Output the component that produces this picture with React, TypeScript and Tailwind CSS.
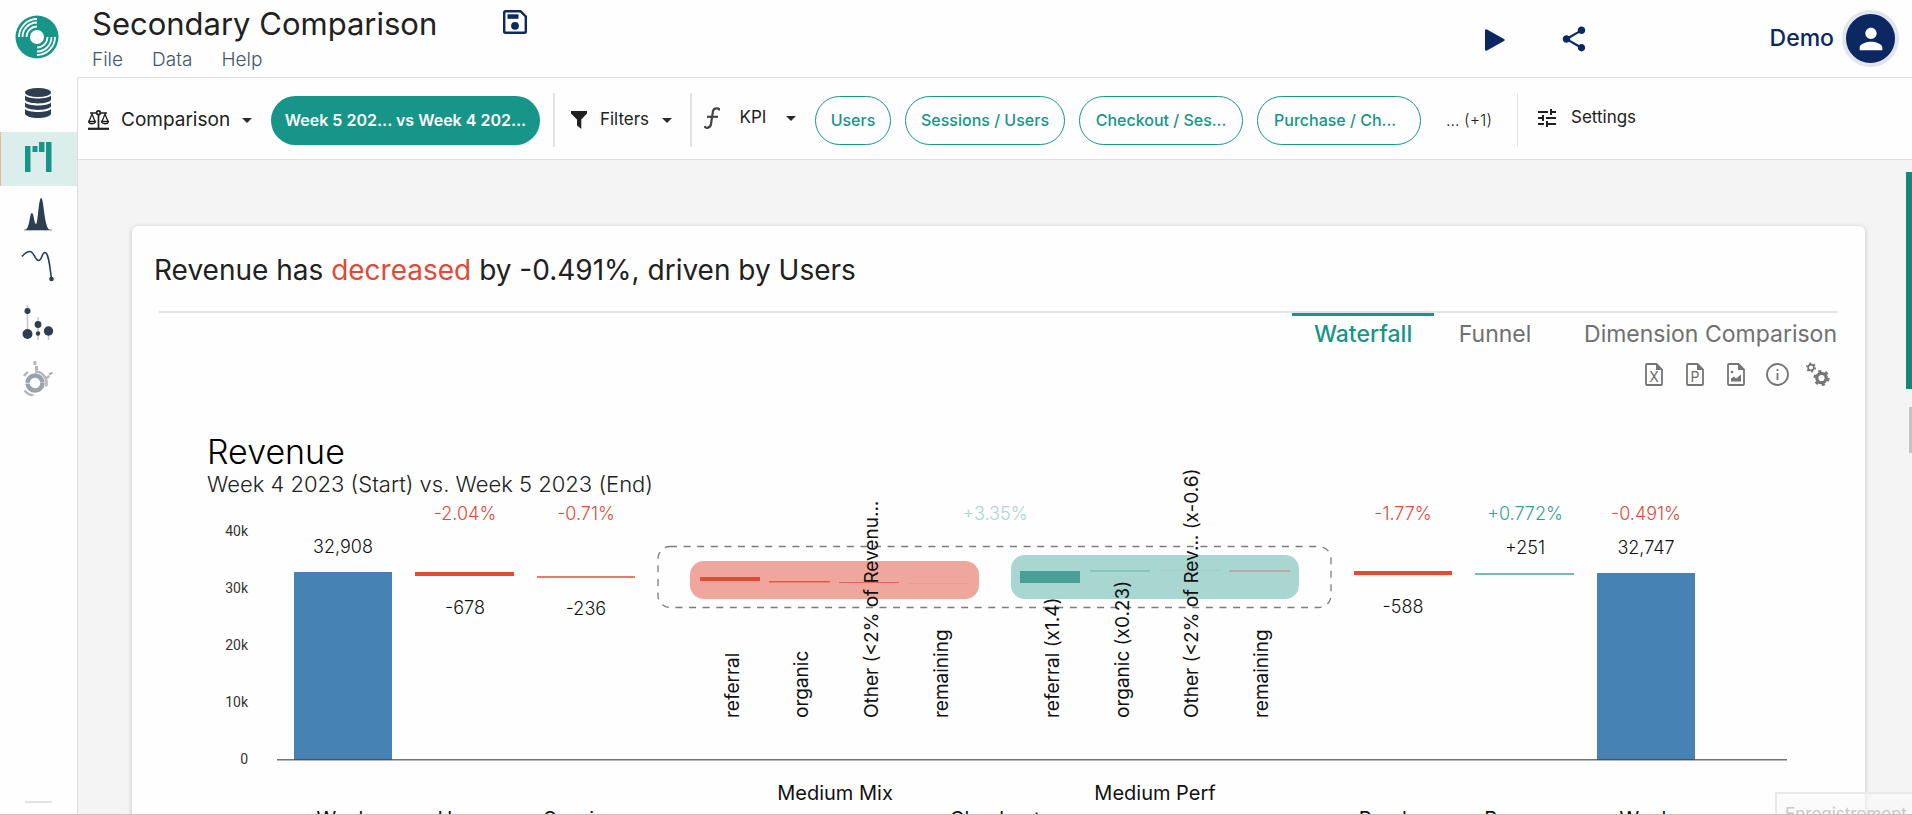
import type { ReactNode } from "react";
import { MdPerson, MdShare, MdTune } from "react-icons/md";

const RED = "#e04b38";
const TEAL = "#3a9f93";

function Logo() {
  return (
    <svg viewBox="0 0 44 44" className="h-11 w-11" aria-hidden="true">
      <circle cx="22" cy="22" r="21.5" fill="#169588" />
      <circle cx="22" cy="22" r="7" fill="#fff" />
      <g fill="none" stroke="#fff" strokeWidth="1.8">
        <path d="M4 22A18 18 0 0 1 22 4" />
        <path d="M7.5 22A14.500 14.500 0 0 1 22 7.500" />
        <path d="M11.500 22A10.500 10.500 0 0 1 22 11.500" />
        <path d="M40 22A18 18 0 0 1 22 40" />
        <path d="M36.500 22A14.500 14.500 0 0 1 22 36.500" />
        <path d="M32.500 22A10.500 10.500 0 0 1 22 32.500" />
      </g>
    </svg>
  );
}

function DatabaseIcon() {
  return (
    <svg viewBox="0 0 26 30" className="h-[30px] w-[26px]" fill="#2c3e50">
      <ellipse cx="13" cy="4.500" rx="13" ry="4.500" />
      <path d="M0 7.500c3 4 23 4 26 0v4.500c-3 4.500-23 4.500-26 0z" />
      <path d="M0 14.500c3 4 23 4 26 0v4c-3 4.500-23 4.500-26 0z" />
      <path d="M0 21c3 4 23 4 26 0v5c-3 5.300-23 5.300-26 0z" />
    </svg>
  );
}

function WaterfallIcon() {
  return (
    <svg viewBox="0 0 27 30" className="h-[30px] w-[27px]" fill="#169588">
      <rect x="0" y="4" width="5.500" height="26" />
      <rect x="7.500" y="4" width="5" height="6" />
      <rect x="14" y="0" width="5.500" height="10" />
      <rect x="21" y="0" width="5.500" height="30" />
    </svg>
  );
}

function PeaksIcon() {
  return (
    <svg viewBox="0 0 28 34" className="h-[34px] w-7" fill="#2c3e50">
      <path d="M1 32c5-1 4.500-17 6.800-17s2.200 11 4.200 11 2.500-26 5.200-26 3 31 8.800 32z" />
      <rect x="0" y="31.500" width="28" height="1" opacity=".6" />
    </svg>
  );
}

function CurveIcon() {
  return (
    <svg viewBox="0 0 33 32" className="h-8 w-[33px]" fill="none">
      <path d="M1 6.500C4 3 6 1.500 9 1.500c4 0 5 9 8.500 9S21 2 24 2.500c4 .5 5 17 6.500 26" stroke="#2c3e50" strokeWidth="1.600" />
      <circle cx="30.500" cy="29" r="2.300" fill="#2c3e50" />
    </svg>
  );
}

function BubblesIcon() {
  return (
    <svg viewBox="0 0 32 36" className="h-9 w-8">
      <path d="M5.500 0v34M16 12v23M26.500 22v13" stroke="#c4c8cb" strokeWidth="1.500" />
      <g fill="#2c3e50">
        <circle cx="5.500" cy="6" r="3" />
        <circle cx="5.500" cy="29" r="5" />
        <circle cx="16" cy="19.500" r="3.400" />
        <circle cx="16" cy="28.500" r="2.200" />
        <circle cx="26.500" cy="26" r="4.700" />
      </g>
    </svg>
  );
}

function SunburstIcon() {
  return (
    <svg viewBox="0 0 30 36" className="h-9 w-[30px]" fill="none">
      <circle cx="12" cy="23" r="7.500" stroke="#98a3ad" strokeWidth="4.500" strokeDasharray="22.800 .760" />
      <g stroke="#b3b7b8">
        <path d="M12 11.500A11.500 11.500 0 0 1 23 26.500" strokeWidth="2.500" />
        <path d="M1 16a13 13 0 0 1 4-4M1.500 30.500a13 13 0 0 0 9 5" strokeWidth="2.500" />
        <path d="M12 1v4M13.500 6v4" strokeWidth="3" />
        <path d="M22.500 18.500l4-2.500M26 14.500l3.500-2" strokeWidth="2.500" />
      </g>
    </svg>
  );
}

function SaveIcon() {
  return (
    <svg viewBox="0 0 24 24" className="h-6 w-6">
      <path d="M2.500 1.200h15l5.300 5.300v15a1.300 1.300 0 0 1-1.300 1.300h-19a1.300 1.300 0 0 1-1.300-1.300v-19A1.300 1.300 0 0 1 2.500 1.200z" fill="none" stroke="#0b2863" strokeWidth="2.400" />
      <rect x="4.500" y="4.300" width="11" height="4.500" fill="#0b2863" />
      <circle cx="12" cy="15.800" r="3.900" fill="#0b2863" />
    </svg>
  );
}

function ScaleIcon() {
  return (
    <svg viewBox="0 0 21 20" className="h-5 w-[21px]" fill="none" stroke="#212121" strokeWidth="1.700">
      <path d="M2 3h6.500M12.500 3H19M10.500 5v13" />
      <circle cx="10.500" cy="2.800" r="1.900" />
      <path d="M1 11.500L4 4l3 7.500M14 11.500L17 4l3 7.500" strokeWidth="1.300" />
      <path d="M.5 11.500h7c-.5 3-6.500 3-7 0zM13.500 11.500h7c-.5 3-6.500 3-7 0z" strokeWidth="1.300" />
      <path d="M0 18.800h21" strokeWidth="2.200" />
    </svg>
  );
}

function FilterIcon() {
  return (
    <svg viewBox="0 0 16 18" className="h-[18px] w-4" fill="#212121">
      <path d="M0 0h16v2.500l-5.700 6V18l-4.300-3.500V8.500L0 2.500z" />
    </svg>
  );
}

function FunctionIcon() {
  return (
    <svg viewBox="0 0 16 22" className="h-[22px] w-4" fill="none" stroke="#454545" strokeWidth="2.200">
      <path d="M15.500 3.500C15.500 1 10 .3 9 4L7 17c-.5 4-5.500 5-6.500 2" />
      <path d="M3 9.800h11" />
    </svg>
  );
}

function Caret() {
  return (
    <svg viewBox="0 0 10 5" className="h-[5px] w-[10px] shrink-0" fill="#2b2b2b" aria-hidden="true">
      <path d="M0 0h10L5 5z" />
    </svg>
  );
}

function FileIcon({ children }: { children: ReactNode }) {
  return (
    <svg viewBox="0 0 18 23" className="h-[23px] w-[18px]">
      <path d="M2 1h9.500L17 6.500V21a1 1 0 0 1-1 1H2a1 1 0 0 1-1-1V2a1 1 0 0 1 1-1z" fill="none" stroke="#757575" strokeWidth="1.800" />
      <path d="M11 1v6h6.500z" fill="#757575" />
      {children}
    </svg>
  );
}

function Letter({ children }: { children: string }) {
  return (
    <text x="9" y="19" textAnchor="middle" fontSize="14" fill="#6b6b6b">
      {children}
    </text>
  );
}

const pills = [
  { text: "Users", style: "w-[76px]" },
  { text: "Sessions / Users", style: "w-[160px]" },
  { text: "Checkout / Ses...", style: "w-[164px]" },
  { text: "Purchase / Ch...", style: "w-[164px] pl-4 text-left" },
];

const navItems = [
  { label: "Data sources", icon: <DatabaseIcon />, box: "h-[55px] pb-[3px]" },
  { label: "Comparison", icon: <WaterfallIcon />, box: "h-[54px] border-l border-[#f5b09c] bg-[#dbeeeb] pb-1" },
  { label: "Distribution", icon: <PeaksIcon />, box: "h-[58px]" },
  { label: "Trend", icon: <CurveIcon />, box: "h-[44px]" },
  { label: "Segments", icon: <BubblesIcon />, box: "h-[70px]" },
  { label: "Breakdown", icon: <SunburstIcon />, box: "h-[40px]" },
];

type Bar = { x: number; y: number; w: number; h: number; fill: string };

const bars: Bar[] = [
  { x: 294, y: 572, w: 98, h: 188, fill: "#4682b4" },
  { x: 415, y: 572, w: 99, h: 4, fill: RED },
  { x: 537, y: 576, w: 98, h: 2, fill: "#e8796b" },
  { x: 1354, y: 571, w: 98, h: 4, fill: RED },
  { x: 1475, y: 573, w: 99, h: 2, fill: "#79b9b2" },
  { x: 1597, y: 573, w: 98, h: 187, fill: "#4682b4" },
  { x: 700, y: 577, w: 60, h: 4, fill: RED },
  { x: 769, y: 581, w: 61, h: 1.5, fill: "#dd5b4e" },
  { x: 839, y: 582, w: 60, h: 1, fill: "#e2665a" },
  { x: 909, y: 583, w: 60, h: 1, fill: "#eb9c92" },
  { x: 1020, y: 571, w: 60, h: 12, fill: "#499f95" },
  { x: 1090, y: 570, w: 60, h: 2, fill: "#8ac4bf" },
  { x: 1160, y: 570, w: 60, h: 1, fill: "#b7c2c2" },
  { x: 1229, y: 570, w: 61, h: 2, fill: "#b8aaa8" },
];

const ticks = [
  { t: "40k", y: 536 },
  { t: "30k", y: 593 },
  { t: "20k", y: 650 },
  { t: "10k", y: 707 },
  { t: "0", y: 764 },
];

const changes = [
  { t: "-2.04%", x: 465, fill: RED },
  { t: "-0.71%", x: 586, fill: RED },
  { t: "+3.35%", x: 995, fill: "#a5d6d0" },
  { t: "-1.77%", x: 1403, fill: RED },
  { t: "+0.772%", x: 1525, fill: TEAL },
  { t: "-0.491%", x: 1646, fill: RED },
];

const values = [
  { t: "32,908", x: 343, y: 553 },
  { t: "-678", x: 465, y: 614 },
  { t: "-236", x: 586, y: 615 },
  { t: "-588", x: 1403, y: 613 },
  { t: "+251", x: 1525, y: 554 },
  { t: "32,747", x: 1646, y: 554 },
];

const members = [
  { t: "referral", x: 739 },
  { t: "organic", x: 808 },
  { t: "Other (<2% of Revenu...", x: 878 },
  { t: "remaining", x: 948 },
  { t: "referral (x1.4)", x: 1059 },
  { t: "organic (x0.23)", x: 1129 },
  { t: "Other (<2% of Rev... (x-0.6)", x: 1198 },
  { t: "remaining", x: 1268 },
];

const stages = [
  { t: "Week", x: 343 },
  { t: "Users", x: 465 },
  { t: "Sessions", x: 586 },
  { t: "Checkout", x: 995 },
  { t: "Purchase", x: 1403 },
  { t: "Revenue", x: 1525 },
  { t: "Week", x: 1646 },
];

function WaterfallChart() {
  return (
    <svg viewBox="132 500 1733 340" className="block h-auto w-full overflow-visible" role="img" aria-label="Revenue waterfall">
      <rect x="658" y="546.500" width="673" height="61" rx="12" fill="none" stroke="#7d7d7d" strokeWidth="1.300" strokeDasharray="7 6.600" />
      <rect x="690" y="561" width="289" height="38" rx="14" fill="#efa69d" />
      <rect x="1011" y="555" width="288" height="44" rx="14" fill="#a8d6d1" />
      {bars.map((b) => (
        <rect key={b.x} x={b.x} y={b.y} width={b.w} height={b.h} fill={b.fill} />
      ))}
      <rect x="277" y="759" width="1510" height="1.500" fill="#444" opacity=".75" />
      <g fontSize="14" fill="#333" textAnchor="end" fontFamily="Roboto, sans-serif">
        {ticks.map((k) => (
          <text key={k.t} x="248" y={k.y}>{k.t}</text>
        ))}
      </g>
      <g fontSize="18" textAnchor="middle" className="font-light">
        {changes.map((c) => (
          <text key={c.x} x={c.x} y="520" fill={c.fill}>{c.t}</text>
        ))}
        {values.map((v) => (
          <text key={v.x} x={v.x} y={v.y} fill="#111">{v.t}</text>
        ))}
      </g>
      <g fontSize="19" fill="#111">
        {members.map((m) => (
          <text key={m.x} transform={`translate(${m.x} 718) rotate(-90)`}>{m.t}</text>
        ))}
      </g>
      <g fontSize="20" fill="#111" textAnchor="middle">
        <text x="835" y="800">Medium Mix</text>
        <text x="1155" y="800">Medium Perf</text>
        {stages.map((s) => (
          <text key={s.x} x={s.x} y="826">{s.t}</text>
        ))}
      </g>
    </svg>
  );
}

export default function App() {
  return (
    <div className="relative flex h-screen overflow-hidden border-b border-[#c4c4c4] bg-[#fefefe] font-[Inter,'Open_Sans',sans-serif] text-[#212121]">
      <aside className="flex w-[77px] shrink-0 flex-col">
        <a href="#home" aria-label="Home" className="flex h-[77px] items-center justify-center pb-[3px] pr-[3px]">
          <Logo />
        </a>
        <nav className="flex flex-col">
          {navItems.map((n) => (
            <button key={n.label} aria-label={n.label} className={`flex w-full items-center justify-center pr-[2px] ${n.box}`}>
              {n.icon}
            </button>
          ))}
        </nav>
        <div className="mx-auto mb-[11px] mt-auto h-[2px] w-[27px] bg-[#e2e2e2]" />
      </aside>

      <div className="flex min-w-0 flex-1 flex-col">
        <header className="flex h-[77px] shrink-0 pl-[15px] pr-[13px]">
          <div>
            <div className="flex items-start">
              <h1 className="w-[411px] pt-1 text-[31px] leading-10">Secondary Comparison</h1>
              <button aria-label="Save" className="pt-[10px]"><SaveIcon /></button>
            </div>
            <nav className="flex gap-[29px] text-[19px] font-light leading-8 text-[#44556b]">
              <button>File</button>
              <button>Data</button>
              <button>Help</button>
            </nav>
          </div>
          <div className="ml-auto flex items-center text-[#0b2863]">
            <button aria-label="Play" className="mr-[54px] pt-[2px]">
              <svg viewBox="0 0 20 22" className="h-[22px] w-5" fill="currentColor">
                <path d="M0 1.500Q0-.4 2 .4L19 10q1.500 1 0 2L2 21.600q-2 .8-2-1.100z" />
              </svg>
            </button>
            <button aria-label="Share" className="mr-[181px]"><MdShare size={30} /></button>
            <span className="mr-2 text-[23px] font-medium">Demo</span>
            <button aria-label="Account" className="flex h-[57px] w-[57px] items-center justify-center rounded-full border-4 border-[#e2e5ec] bg-[#0b2863] text-white">
              <MdPerson size={34} />
            </button>
          </div>
        </header>

        <div className="flex min-h-0 flex-1 flex-col border-l border-t border-[#dfdfdf]">
          <div className="flex h-[82px] shrink-0 items-center border-b border-[#dfdfdf] pt-[3px] text-base">
            <button className="flex w-[193px] items-center gap-3 pl-[10px]">
              <ScaleIcon />
              <span className="w-[109px] text-left text-[19px]">Comparison</span>
              <Caret />
            </button>
            <button className="h-[49px] w-[269px] rounded-full bg-[#169588] font-semibold text-white">
              Week 5 202... vs Week 4 202...
            </button>
            <div className="ml-[13px] h-[54px] w-[2px] bg-[#e2e2e2]" />
            <button className="flex w-[135px] items-center gap-3 pl-4 text-[17px]">
              <FilterIcon />
              <span className="w-[51px]">Filters</span>
              <Caret />
            </button>
            <div className="h-[54px] w-[2px] bg-[#e2e2e2]" />
            <button className="flex w-[123px] items-center gap-4 pb-1 pl-3 text-[17px]">
              <FunctionIcon />
              <span className="w-[34px]">KPI</span>
              <Caret />
            </button>
            <div className="flex gap-[14px]">
              {pills.map((p) => (
                <button key={p.text} className={`h-[49px] rounded-full border border-[#169588] font-medium text-[#169588] ${p.style}`}>
                  {p.text}
                </button>
              ))}
            </div>
            <button className="w-[96px] font-light">... (+1)</button>
            <div className="h-[54px] w-px bg-[#e2e2e2]" />
            <button className="flex items-center gap-3 pb-1 pl-[17px] text-[17px]">
              <MdTune size={24} />
              Settings
            </button>
          </div>

          <main className="flex-1 bg-[#f4f4f4] pl-[54px] pr-[47px] pt-[66px]">
            <section className="h-[700px] rounded-md bg-[#fefefe] pt-6 shadow-[0_1px_5px_rgba(0,0,0,0.22)]">
              <h2 className="pl-[22px] text-[28px] leading-10">
                Revenue has <span className="text-[#e04b38]">decreased</span> by -0.491%, driven by Users
              </h2>
              <div className="ml-[27px] mr-7 mt-[21px] h-[2px] bg-[#e3e3e3]" />
              <div role="tablist" className="mr-7 flex justify-end text-[23px] leading-9 text-[#707070]">
                <button role="tab" aria-selected="true" className="w-[142px] border-t-3 border-[#169588] font-medium text-[#169588]">
                  Waterfall
                </button>
                <button role="tab" aria-selected="false" className="w-[122px] border-t-3 border-transparent">Funnel</button>
                <button role="tab" aria-selected="false" className="border-t-3 border-transparent pl-7">Dimension Comparison</button>
              </div>
              <div className="mr-[35px] mt-[10px] flex items-center justify-end gap-[17px] text-[#757575]">
                <button aria-label="Export spreadsheet" className="flex w-6 justify-center"><FileIcon><Letter>X</Letter></FileIcon></button>
                <button aria-label="Export slides" className="flex w-6 justify-center"><FileIcon><Letter>P</Letter></FileIcon></button>
                <button aria-label="Export image" className="flex w-6 justify-center">
                  <FileIcon>
                    <path d="M4 18.500v-3l3-2 2 2 5-4v7z" fill="#757575" />
                    <circle cx="5" cy="9" r="1.300" fill="#757575" />
                  </FileIcon>
                </button>
                <button aria-label="Information" className="flex w-6 justify-center">
                  <svg viewBox="0 0 23 23" className="h-[23px] w-[23px]">
                    <circle cx="11.500" cy="11.500" r="10.500" fill="none" stroke="currentColor" strokeWidth="1.800" />
                    <path d="M11.500 10v7M11.500 6v2" stroke="currentColor" strokeWidth="1.800" />
                  </svg>
                </button>
                <button aria-label="Chart settings" className="flex w-6 justify-center">
                  <svg viewBox="0 0 24 24" className="h-6 w-6" fill="none" stroke="currentColor">
                    <circle cx="5" cy="5.500" r="2.900" strokeWidth="1.700" />
                    <circle cx="5" cy="5.500" r="4.300" strokeWidth="1.600" strokeDasharray="1.900 2.603" />
                    <circle cx="15.500" cy="16" r="4.700" strokeWidth="3.200" />
                    <circle cx="15.500" cy="16" r="7" strokeWidth="2.200" strokeDasharray="3.300 4.030" />
                  </svg>
                </button>
              </div>
              <div className="pl-[75px] pt-[46px]">
                <h3 className="text-[34px] font-light leading-10 text-black">Revenue</h3>
                <p className="pb-1 text-[22px] font-light leading-6">Week 4 2023 (Start) vs. Week 5 2023 (End)</p>
              </div>
              <WaterfallChart />
            </section>
          </main>
        </div>
      </div>

      <div className="absolute right-0 top-[172px] h-[217px] w-[6px] bg-[#13877a]" />
      <div className="absolute right-0 top-[407px] h-[46px] w-[3px] bg-[#c4c4c4]" />
      <div className="absolute -bottom-6 right-0 h-[46px] w-[137px] overflow-hidden border-2 border-r-0 border-[#e9e9e9] bg-[#f9f9f9]/60 pl-2 pt-2 text-[17px] leading-6 text-[#c9c9c9]">
        Enregistrement
      </div>
    </div>
  );
}
